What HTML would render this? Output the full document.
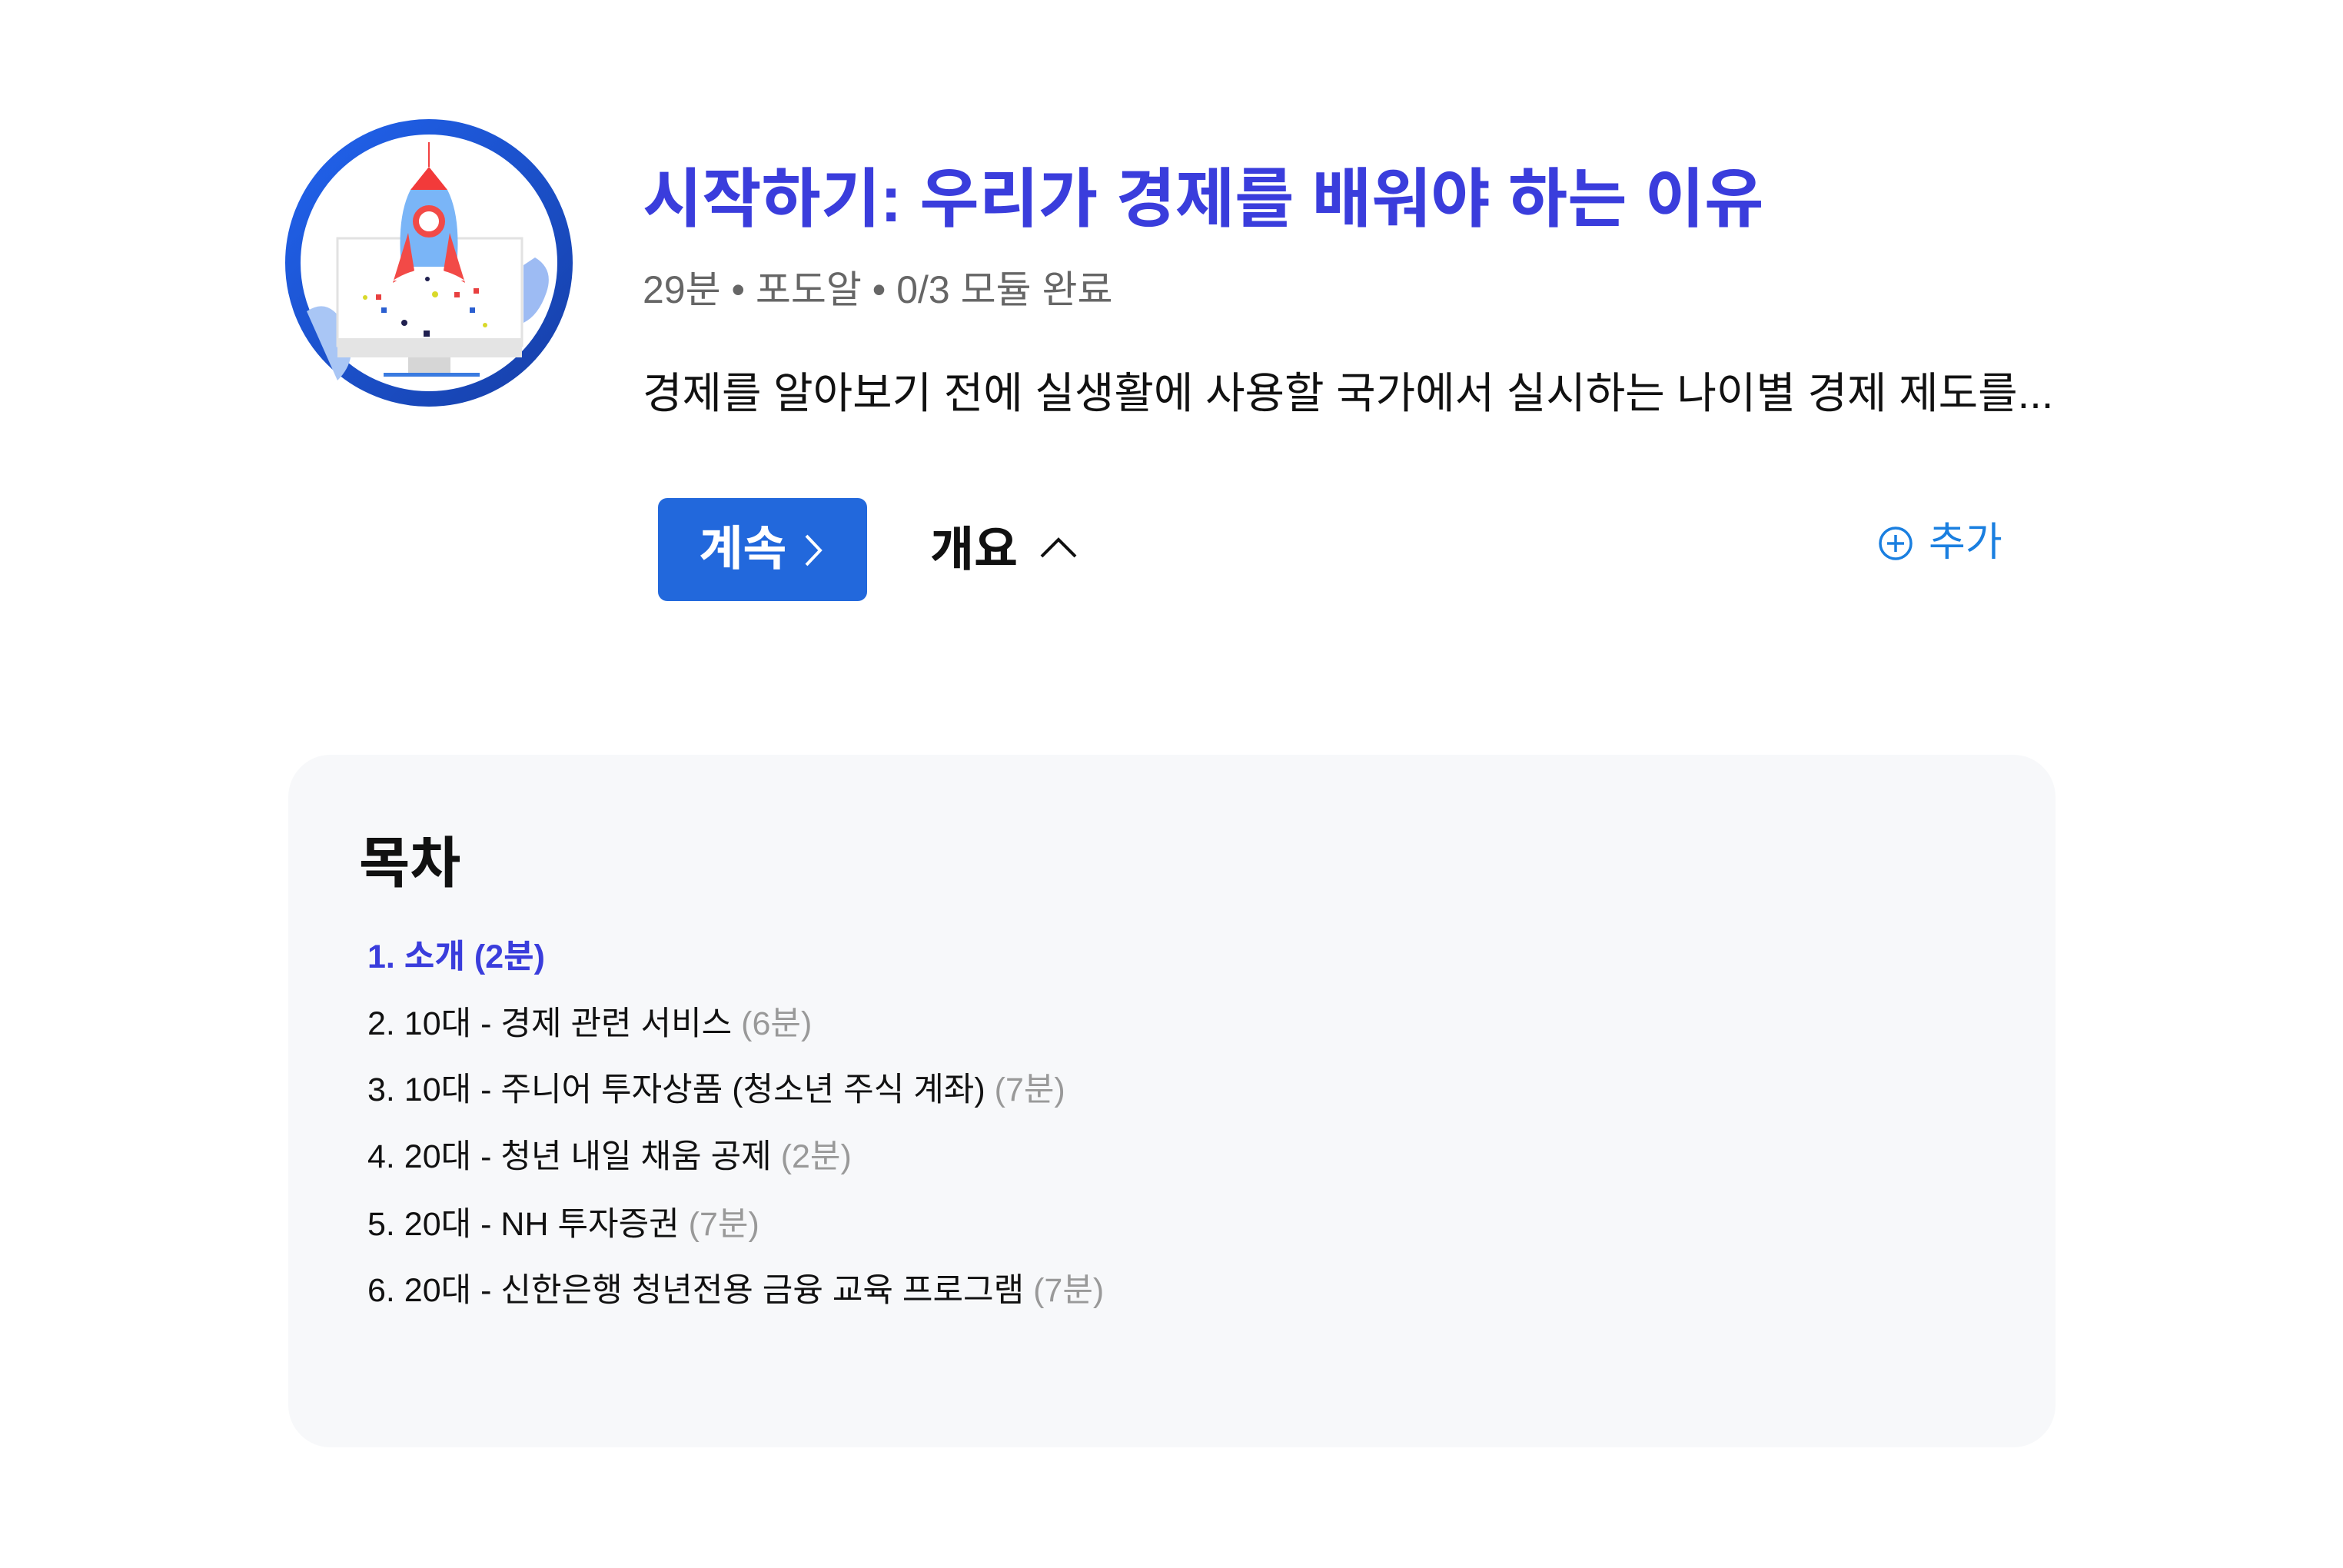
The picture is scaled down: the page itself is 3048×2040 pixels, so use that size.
<!DOCTYPE html>
<html><head><meta charset="utf-8"><style>
html,body{margin:0;padding:0;background:#fff;width:3048px;height:2040px;overflow:hidden;font-family:"Liberation Sans","Noto Sans CJK KR",sans-serif;}
.a{position:absolute;white-space:nowrap;}
.title{left:836px;top:204px;font-size:84px;font-weight:bold;color:#3a3ddc;line-height:110px;}
.meta{left:836px;top:347px;font-size:50px;color:#666;line-height:60px;}
.desc{left:836px;top:477px;font-size:56px;color:#111;line-height:70px;}
.btn{left:856px;top:648px;width:272px;height:134px;background:#2268dc;border-radius:12px;color:#fff;font-size:62px;line-height:134px;text-align:center;font-weight:bold;}
.ov{left:1210px;top:678px;font-size:62px;color:#111;line-height:76px;font-weight:bold;}
.add{left:2509px;top:673px;font-size:52px;color:#1a7fe0;line-height:66px;}
.panel{left:375px;top:982px;width:2299px;height:901px;background:#f7f8fa;border-radius:55px;}
.toc{left:467px;top:1082px;font-size:72px;font-weight:bold;color:#111;line-height:84px;}
.li{left:478px;font-size:43px;color:#111;line-height:56px;}
.li span{color:#999;}
</style></head><body>
<svg class="a" style="left:371px;top:155px" width="374" height="374" viewBox="0 0 374 374">
<defs><linearGradient id="g" x1="0" y1="0" x2="1" y2="1"><stop offset="0" stop-color="#2163ee"/><stop offset="1" stop-color="#163fa8"/></linearGradient></defs>
<circle cx="187" cy="187" r="177" fill="#fff" stroke="url(#g)" stroke-width="20"/>
<path d="M28 250 q30 -20 50 20 q20 40 -10 70 z" fill="#a9c6f5"/>
<path d="M325 180 q25 15 15 45 q-10 30 -30 40 v-75z" fill="#9dbbf3"/>
<rect x="68" y="155" width="240" height="140" fill="#fff" stroke="#e2e2e2" stroke-width="3"/>
<rect x="68" y="285" width="240" height="25" fill="#e4e4e4"/>
<rect x="160" y="310" width="55" height="20" fill="#d6d6d6"/>
<rect x="128" y="330" width="125" height="5" fill="#3a7be0"/>
<line x1="187" y1="30" x2="187" y2="62" stroke="#f24141" stroke-width="2"/>
<path d="M187 62 l-24 30 h48z" fill="#f23a3a"/>
<path d="M163 92 h48 q18 35 12 100 h-72 q-6 -65 12 -100z" fill="#7ab5f7"/>
<path d="M160 148 l-20 65 l28 -16z M214 148 l20 65 l-28 -16z" fill="#f24a47"/>
<circle cx="187" cy="133" r="17" fill="#fff" stroke="#f24a47" stroke-width="8"/>
<path d="M140 210 q47 -30 94 0z" fill="#fff"/>
<g fill="#2b5fd0"><rect x="125" y="245" width="7" height="7"/><rect x="240" y="245" width="7" height="7"/></g>
<g fill="#e84040"><rect x="118" y="228" width="7" height="7"/><rect x="220" y="225" width="7" height="7"/><rect x="245" y="220" width="7" height="7"/></g>
<g fill="#202050"><circle cx="185" cy="208" r="3"/><circle cx="155" cy="265" r="4"/><rect x="180" y="275" width="8" height="8"/></g>
<g fill="#d9d92a"><circle cx="104" cy="232" r="3"/><circle cx="195" cy="228" r="4"/><circle cx="260" cy="268" r="3"/></g>
</svg>
<div class="a title">시작하기: 우리가 경제를 배워야 하는 이유</div>
<div class="a meta">29분 • 포도알 • 0/3 모듈 완료</div>
<div class="a desc">경제를 알아보기 전에 실생활에 사용할 국가에서 실시하는 나이별 경제 제도를...</div>
<div class="a btn">계속 <svg width="34" height="50" viewBox="0 0 34 50" style="vertical-align:-6px"><path d="M8 6 L26 25 L8 44" fill="none" stroke="#fff" stroke-width="4"/></svg></div>
<div class="a ov">개요 <svg width="52" height="40" viewBox="0 0 52 40" style="vertical-align:4px;margin-left:10px"><path d="M4 32 L26 10 L48 32" fill="none" stroke="#111" stroke-width="4"/></svg></div>
<svg class="a" style="left:2442px;top:683px" width="48" height="48" viewBox="0 0 48 48"><circle cx="24" cy="24" r="20" fill="none" stroke="#1a7fe0" stroke-width="3.5"/><path d="M24 13v22M13 24h22" stroke="#1a7fe0" stroke-width="3.5"/></svg>
<div class="a add">추가</div>
<div class="a panel"></div>
<div class="a toc">목차</div>
<div class="a li" style="top:1217px;color:#3a3ddc;font-weight:bold">1. 소개 (2분)</div>
<div class="a li" style="top:1304px">2. 10대 - 경제 관련 서비스 <span>(6분)</span></div>
<div class="a li" style="top:1390px">3. 10대 - 주니어 투자상품 (청소년 주식 계좌) <span>(7분)</span></div>
<div class="a li" style="top:1477px">4. 20대 - 청년 내일 채움 공제 <span>(2분)</span></div>
<div class="a li" style="top:1565px">5. 20대 - NH 투자증권 <span>(7분)</span></div>
<div class="a li" style="top:1651px">6. 20대 - 신한은행 청년전용 금융 교육 프로그램 <span>(7분)</span></div>
</body></html>
